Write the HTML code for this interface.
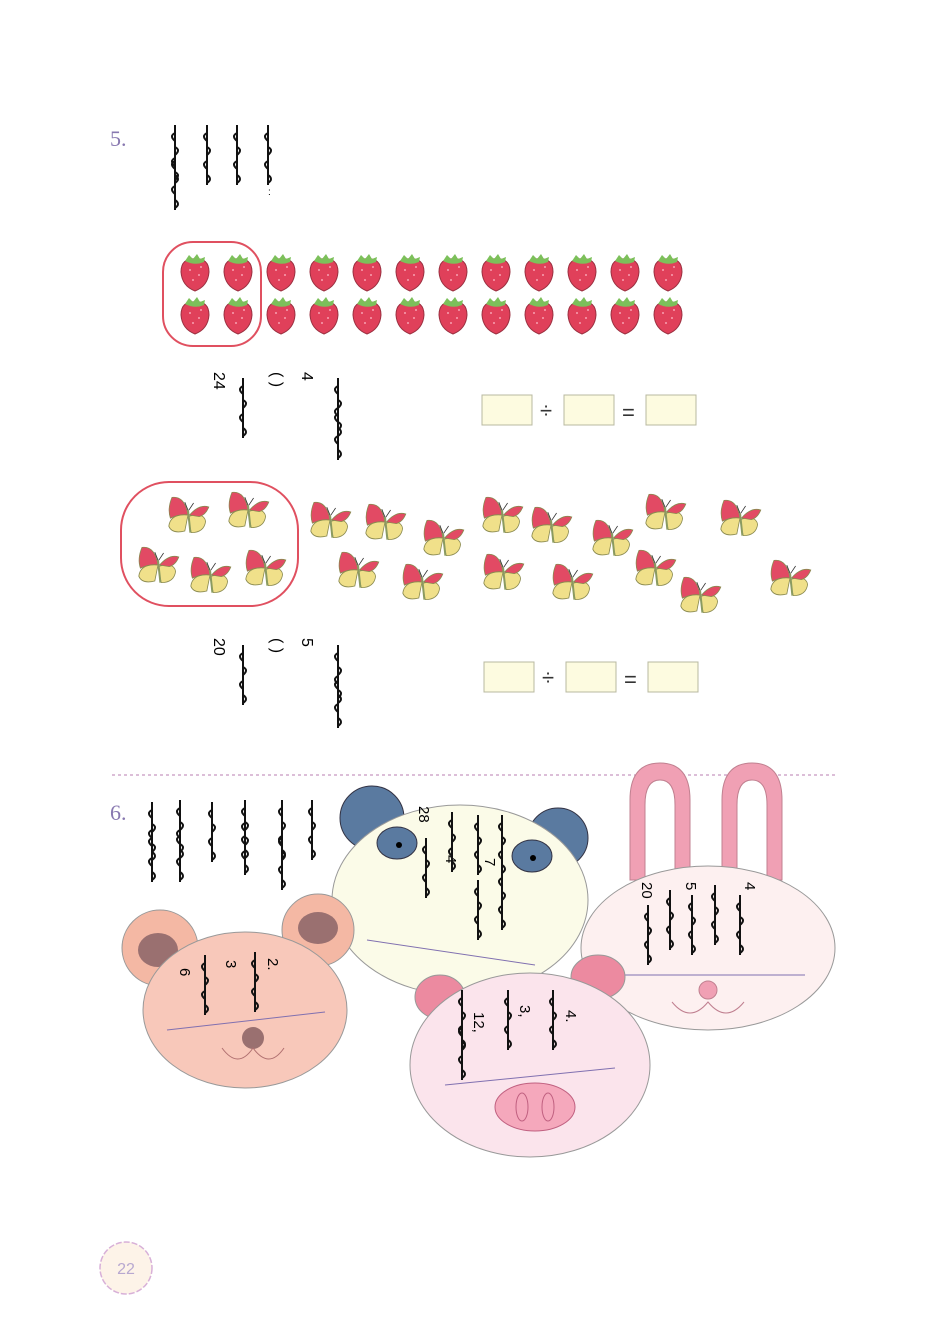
<!DOCTYPE html><html><head><meta charset="utf-8"><style>
body{margin:0;background:#fff;width:940px;height:1337px;overflow:hidden;font-family:"Liberation Sans",sans-serif}
svg{position:absolute;left:0;top:0}
</style></head><body>
<svg width="940" height="1337" viewBox="0 0 940 1337">
<defs>
<g id="sb"><path d="M0,-13 Q14,-14 14,0 Q13,14 0,19 Q-13,14 -14,0 Q-14,-14 0,-13Z" fill="#e0405a" stroke="#9a3040" stroke-width="1"/><g fill="#f8a0b0"><circle cx="-5" cy="-2" r="1"/><circle cx="4" cy="3" r="1"/><circle cx="-2" cy="8" r="1"/><circle cx="6" cy="-5" r="1"/></g><path d="M-10,-11 L-6,-17 L-2,-13 L2,-18 L5,-13 L10,-15 L9,-10 Q0,-6 -10,-11Z" fill="#7cc05a"/></g>
<g id="bf0"><path d="M0,0 Q-22,-2 -24,14 Q-20,24 -4,20Z" fill="#f0e08a" stroke="#8a8a50" stroke-width="1"/><path d="M0,0 Q-4,-24 -20,-22 Q-26,-8 -22,4 Q-10,-2 0,0Z" fill="#e24a64" stroke="#8a8a50" stroke-width="1"/><path d="M0,2 Q20,-4 22,8 Q20,22 4,22Z" fill="#f0e08a" stroke="#8a8a50" stroke-width="1"/><path d="M2,0 Q14,-14 26,-10 Q22,0 14,2Z" fill="#e24a64" stroke="#8a8a50" stroke-width="1"/><line x1="0" y1="-6" x2="3" y2="22" stroke="#8a9a60" stroke-width="2.5"/><path d="M0,-6 l-4,-10 M1,-6 l6,-9" stroke="#333" fill="none"/></g>
<g id="bf"><use href="#bf0" transform="scale(0.8)"/></g>
<g id="mg" stroke="#111" stroke-width="2" fill="none"><path d="M0,0 V60 M0,8 q-6,3 0,8 M0,22 q6,3 0,8 M0,36 q-6,3 0,8 M0,50 q6,4 0,8"/></g>
</defs>
<text x="110" y="146" font-size="22" fill="#8878b0" font-family="Liberation Serif">5.</text>
<g transform="translate(175,125)"><use href="#mg"/><use href="#mg" y="25"/></g>
<g transform="translate(207,125)"><use href="#mg"/></g>
<g transform="translate(237,125)"><use href="#mg"/></g>
<g transform="translate(268,125)"><use href="#mg"/></g>
<text x="268" y="195" font-size="10">:</text>
<rect x="163" y="242" width="98" height="104" rx="30" fill="none" stroke="#e05060" stroke-width="2"/>
<g>
<use href="#sb" x="195" y="272"/><use href="#sb" x="238" y="272"/><use href="#sb" x="281" y="272"/><use href="#sb" x="324" y="272"/><use href="#sb" x="367" y="272"/><use href="#sb" x="410" y="272"/><use href="#sb" x="453" y="272"/><use href="#sb" x="496" y="272"/><use href="#sb" x="539" y="272"/><use href="#sb" x="582" y="272"/><use href="#sb" x="625" y="272"/><use href="#sb" x="668" y="272"/>
<use href="#sb" x="195" y="315"/><use href="#sb" x="238" y="315"/><use href="#sb" x="281" y="315"/><use href="#sb" x="324" y="315"/><use href="#sb" x="367" y="315"/><use href="#sb" x="410" y="315"/><use href="#sb" x="453" y="315"/><use href="#sb" x="496" y="315"/><use href="#sb" x="539" y="315"/><use href="#sb" x="582" y="315"/><use href="#sb" x="625" y="315"/><use href="#sb" x="668" y="315"/>
</g>
<g font-size="16">
<text transform="translate(214,372) rotate(90)">24</text>
<use href="#mg" x="243" y="378"/>
<text transform="translate(272,372) rotate(90)">(     )</text>
<text transform="translate(302,372) rotate(90)">4</text>
<use href="#mg" x="338" y="378"/><use href="#mg" x="338" y="400"/>
<text transform="translate(214,638) rotate(90)">20</text>
<use href="#mg" x="243" y="645"/>
<text transform="translate(272,638) rotate(90)">(     )</text>
<text transform="translate(302,638) rotate(90)">5</text>
<use href="#mg" x="338" y="645"/><use href="#mg" x="338" y="668"/>
</g>
<g fill="#fdfbe0" stroke="#b8b8a0" stroke-width="1">
<rect x="482" y="395" width="50" height="30"/><rect x="564" y="395" width="50" height="30"/><rect x="646" y="395" width="50" height="30"/>
<rect x="484" y="662" width="50" height="30"/><rect x="566" y="662" width="50" height="30"/><rect x="648" y="662" width="50" height="30"/>
</g>
<g font-size="22" fill="#333"><text x="540" y="418">÷</text><text x="622" y="420">=</text><text x="542" y="685">÷</text><text x="624" y="687">=</text></g>
<rect x="121" y="482" width="177" height="124" rx="48" fill="none" stroke="#e05060" stroke-width="2"/>
<g>
<use href="#bf" x="188" y="515"/><use href="#bf" x="248" y="510"/><use href="#bf" x="330" y="520"/><use href="#bf" x="385" y="522"/><use href="#bf" x="443" y="538"/><use href="#bf" x="502" y="515"/><use href="#bf" x="551" y="525"/><use href="#bf" x="612" y="538"/><use href="#bf" x="665" y="512"/><use href="#bf" x="740" y="518"/>
<use href="#bf" x="158" y="565"/><use href="#bf" x="210" y="575"/><use href="#bf" x="265" y="568"/><use href="#bf" x="358" y="570"/><use href="#bf" x="422" y="582"/><use href="#bf" x="503" y="572"/><use href="#bf" x="572" y="582"/><use href="#bf" x="655" y="568"/><use href="#bf" x="700" y="595"/><use href="#bf" x="790" y="578"/>
</g>
<line x1="112" y1="775" x2="836" y2="775" stroke="#c896c0" stroke-width="1.2" stroke-dasharray="3,3"/>
<text x="110" y="820" font-size="22" fill="#8878b0" font-family="Liberation Serif">6.</text>
<use href="#mg" x="152" y="802"/><use href="#mg" x="152" y="822"/>
<use href="#mg" x="180" y="800"/><use href="#mg" x="180" y="822"/>
<use href="#mg" x="212" y="802"/>
<use href="#mg" x="245" y="800"/><use href="#mg" x="245" y="815"/>
<use href="#mg" x="282" y="800"/><use href="#mg" x="282" y="830"/>
<use href="#mg" x="312" y="800"/>
<g stroke="#c08090" stroke-width="1">
<path d="M630,880 V800 Q630,763 660,763 Q690,763 690,800 V880 H675 V805 Q675,780 660,780 Q645,780 645,805 V880Z" fill="#f0a0b4"/>
<path d="M722,880 V800 Q722,763 752,763 Q782,763 782,800 V880 H767 V805 Q767,780 752,780 Q737,780 737,805 V880Z" fill="#f0a0b4"/>
</g>
<ellipse cx="708" cy="948" rx="127" ry="82" fill="#fdf0f0" stroke="#999" stroke-width="1"/>
<line x1="620" y1="975" x2="805" y2="975" stroke="#8070b0"/>
<circle cx="708" cy="990" r="9" fill="#f0a0b4" stroke="#c08090"/>
<path d="M672,1002 q18,22 36,0 q18,22 36,0" fill="none" stroke="#c08090"/>
<g font-size="15"><text transform="translate(642,882) rotate(90)">20</text><text transform="translate(686,882) rotate(90)">5</text><text transform="translate(745,882) rotate(90)">4</text></g>
<use href="#mg" x="648" y="905"/><use href="#mg" x="670" y="890"/><use href="#mg" x="692" y="895"/><use href="#mg" x="715" y="885"/><use href="#mg" x="740" y="895"/>
<circle cx="372" cy="818" r="32" fill="#5a7aa0" stroke="#334"/>
<circle cx="558" cy="838" r="30" fill="#5a7aa0" stroke="#334"/>
<ellipse cx="460" cy="900" rx="128" ry="95" fill="#fbfbe8" stroke="#999"/>
<ellipse cx="397" cy="843" rx="20" ry="16" fill="#5a7aa0" stroke="#334"/><circle cx="399" cy="845" r="3" fill="#000"/>
<ellipse cx="532" cy="856" rx="20" ry="16" fill="#5a7aa0" stroke="#334"/><circle cx="533" cy="858" r="3" fill="#000"/>
<line x1="367" y1="940" x2="535" y2="965" stroke="#8070b0"/>
<g font-size="15"><text transform="translate(419,806) rotate(90)">28</text><text transform="translate(446,855) rotate(90)">4</text><text transform="translate(485,858) rotate(90)">7</text></g>
<use href="#mg" x="426" y="838"/><use href="#mg" x="452" y="812"/><use href="#mg" x="478" y="815"/><use href="#mg" x="478" y="880"/><use href="#mg" x="502" y="815"/><use href="#mg" x="502" y="870"/>
<circle cx="160" cy="948" r="38" fill="#f4b8a4" stroke="#999"/><ellipse cx="158" cy="950" rx="20" ry="17" fill="#9a7070"/>
<circle cx="318" cy="930" r="36" fill="#f4b8a4" stroke="#999"/><ellipse cx="318" cy="928" rx="20" ry="16" fill="#9a7070"/>
<ellipse cx="245" cy="1010" rx="102" ry="78" fill="#f8c8ba" stroke="#999"/>
<line x1="167" y1="1030" x2="325" y2="1012" stroke="#8070b0"/>
<circle cx="253" cy="1038" r="11" fill="#9a7070"/>
<path d="M222,1048 q16,22 31,0 q16,22 31,0" fill="none" stroke="#b07070"/>
<g font-size="15"><text transform="translate(180,968) rotate(90)">6</text><text transform="translate(226,960) rotate(90)">3</text><text transform="translate(268,958) rotate(90)">2.</text></g>
<use href="#mg" x="205" y="955"/><use href="#mg" x="255" y="952"/>
<ellipse cx="440" cy="997" rx="25" ry="22" fill="#ec8aa0" stroke="#999"/>
<ellipse cx="598" cy="977" rx="27" ry="22" fill="#ec8aa0" stroke="#999"/>
<ellipse cx="530" cy="1065" rx="120" ry="92" fill="#fbe4ec" stroke="#999"/>
<line x1="445" y1="1085" x2="615" y2="1068" stroke="#8070b0"/>
<ellipse cx="535" cy="1107" rx="40" ry="24" fill="#f5a8bc" stroke="#c06080"/>
<ellipse cx="522" cy="1107" rx="6" ry="14" fill="none" stroke="#c06080"/><ellipse cx="548" cy="1107" rx="6" ry="14" fill="none" stroke="#c06080"/>
<g font-size="15"><text transform="translate(474,1012) rotate(90)">12,</text><text transform="translate(520,1005) rotate(90)">3,</text><text transform="translate(566,1010) rotate(90)">4.</text></g>
<use href="#mg" x="462" y="990"/><use href="#mg" x="462" y="1020"/><use href="#mg" x="508" y="990"/><use href="#mg" x="553" y="990"/>
<circle cx="126" cy="1268" r="26" fill="#fdf3e8" stroke="#d8b0d8" stroke-width="1.5" stroke-dasharray="6,2"/>
<text x="126" y="1274" font-size="16" fill="#b8a8d0" text-anchor="middle">22</text>
</svg>
</body></html>
